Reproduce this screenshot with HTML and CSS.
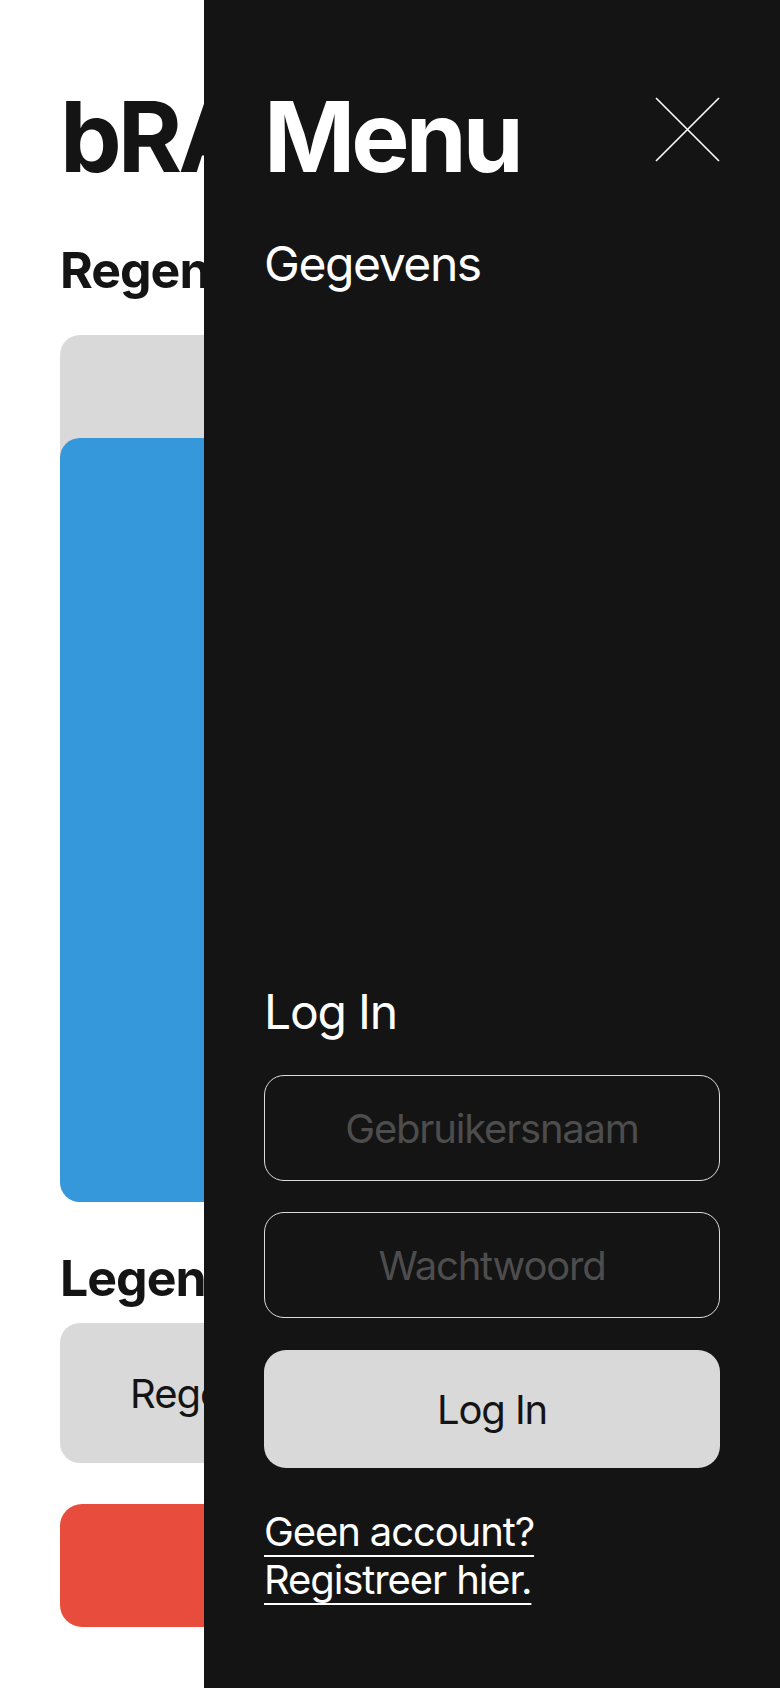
FILE: index.html
```html
<!DOCTYPE html>
<html lang="nl">
<head>
<meta charset="utf-8">
<title>bRAIN</title>
<link rel="stylesheet" href="styles.css">
</head>
<body>
<main class="page">
  <h1 class="title">bRAIN</h1>
  <h2 class="section-title first">Regenval</h2>
  <div class="chart">
    <div class="bar"></div>
  </div>
  <h2 class="section-title legend-title">Legenda</h2>
  <div class="legend">Regenval</div>
  <div class="danger"></div>
</main>

<aside class="menu">
  <div class="menu-top">
    <div class="menu-header">
      <h1 class="menu-title">Menu</h1>
      <button class="close" aria-label="Sluiten">
        <svg width="65" height="65" viewBox="0 0 65 65"><path d="M1 1L64 64M64 1L1 64" stroke="#ffffff" stroke-width="1.6" fill="none"/></svg>
      </button>
    </div>
    <a class="menu-link">Gegevens</a>
  </div>
  <div class="login">
    <h2 class="login-title">Log In</h2>
    <div class="field"><span class="placeholder">Gebruikersnaam</span></div>
    <div class="field second"><span class="placeholder">Wachtwoord</span></div>
    <div class="login-btn">Log In</div>
    <a class="register">Geen account? Registreer hier.</a>
  </div>
</aside>
</body>
</html>
```

FILE: styles.css
```css
* { box-sizing: border-box; }
html, body { margin: 0; padding: 0; }
body {
  font-family: "Inter", "Liberation Sans", sans-serif;
  background: #ffffff;
  color: #141414;
  width: 780px;
  height: 1688px;
  overflow: hidden;
}
.page {
  padding: 88px 60px 0 60px;
}
.title {
  margin: 0;
  font-size: 98px;
  line-height: 98px;
  font-weight: 700;
  letter-spacing: -4px;
}
.section-title {
  margin: 0;
  font-size: 50px;
  line-height: 60px;
  font-weight: 700;
  letter-spacing: -1px;
}
.section-title.first { margin-top: 54px; }
.chart {
  margin-top: 35px;
  height: 867px;
  background: #d9d9d9;
  border-radius: 20px;
  display: flex;
  flex-direction: column;
  justify-content: flex-end;
}
.bar {
  height: 764px;
  background: #3498db;
  border-radius: 20px;
}
.legend-title { margin-top: 46px; }
.legend {
  margin-top: 15px;
  height: 140px;
  background: #d9d9d9;
  border-radius: 20px;
  display: flex;
  align-items: center;
  padding-left: 70px;
  font-size: 40px;
  letter-spacing: -1px;
}
.danger {
  margin-top: 41px;
  height: 123px;
  background: #e74c3c;
  border-radius: 22px;
}

.menu {
  position: absolute;
  top: 0;
  left: 204px;
  width: 576px;
  height: 1688px;
  background: #141414;
  color: #ffffff;
  padding: 88px 60px 84px 60px;
  display: flex;
  flex-direction: column;
}
.menu-header {
  display: flex;
  justify-content: space-between;
  align-items: flex-start;
}
.menu-title {
  margin: 0;
  font-size: 98px;
  line-height: 98px;
  font-weight: 700;
  letter-spacing: -4px;
}
.close {
  margin-top: 9px;
  padding: 0;
  border: 0;
  background: none;
  width: 65px;
  height: 65px;
  display: block;
}
.close svg { display: block; }
.menu-link {
  display: block;
  margin-top: 49px;
  font-size: 48px;
  line-height: 58px;
  font-weight: 400;
  letter-spacing: -1.4px;
}
.login {
  margin-top: auto;
  display: flex;
  flex-direction: column;
}
.login-title {
  margin: 0;
  font-size: 48px;
  line-height: 58px;
  font-weight: 400;
  letter-spacing: -1.2px;
}
.field {
  margin-top: 34px;
  height: 106px;
  border: 1.5px solid #dcdcdc;
  border-radius: 20px;
  display: flex;
  align-items: center;
  justify-content: center;
}
.field.second { margin-top: 31px; }
.placeholder {
  font-size: 40px;
  color: #4d4d4d;
  letter-spacing: -1.2px;
}
.login-btn {
  margin-top: 32px;
  height: 118px;
  background: #d9d9d9;
  color: #141414;
  border-radius: 22px;
  display: flex;
  align-items: center;
  justify-content: center;
  font-size: 40px;
  letter-spacing: -1.1px;
}
.register {
  margin-top: 40px;
  font-size: 40px;
  line-height: 48px;
  color: #ffffff;
  text-decoration: underline;
  text-decoration-thickness: 2px;
  text-underline-offset: 9px;
  letter-spacing: -1.1px;
}
```
